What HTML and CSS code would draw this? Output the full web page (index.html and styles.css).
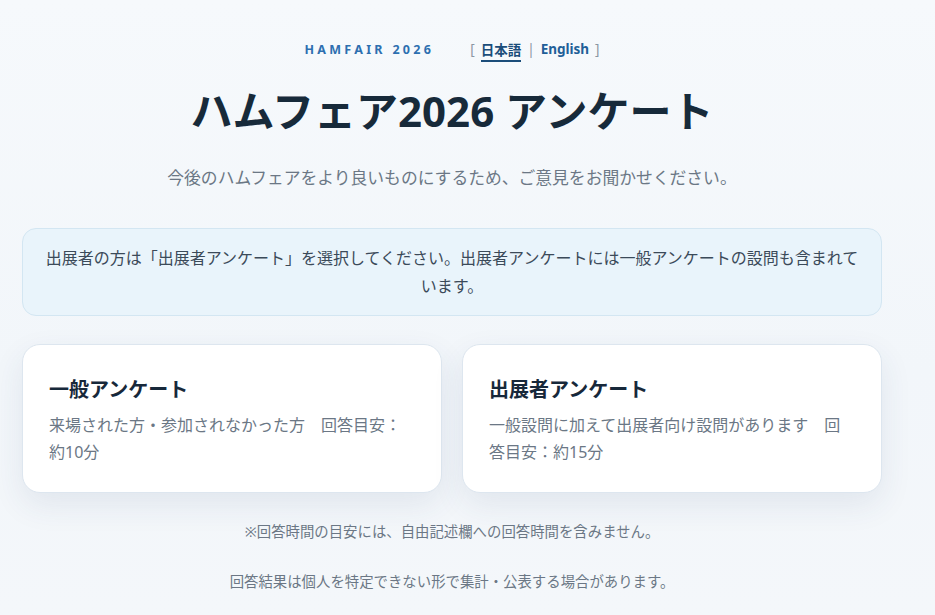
FILE: index.html
```html
<!DOCTYPE html>
<html lang="ja">
<head>
    <meta charset="UTF-8">
    <meta name="viewport" content="width=device-width, initial-scale=1.0">
    <title>ハムフェア2026 アンケート</title>
    <link rel="stylesheet" href="styles.css">
</head>
<body>
    <div class="page">
        <!-- Top bar -->
        <header class="topbar">
            <span class="brand">HAMFAIR 2026</span>
            <nav class="lang">
                <span class="bracket">[</span>
                <a href="#" class="lang-link active">日本語</a>
                <span class="sep">|</span>
                <a href="#" class="lang-link">English</a>
                <span class="bracket">]</span>
            </nav>
        </header>

        <h1 class="title">ハムフェア2026 アンケート</h1>
        <p class="lead">今後のハムフェアをより良いものにするため、ご意見をお聞かせください。</p>

        <!-- Notice -->
        <div class="notice">
            出展者の方は「出展者アンケート」を選択してください。出展者アンケートには一般アンケートの設問も含まれています。
        </div>

        <!-- Survey choices -->
        <div class="cards">
            <a href="#" class="card">
                <h2>一般アンケート</h2>
                <p>来場された方・参加されなかった方　回答目安：約10分</p>
            </a>
            <a href="#" class="card">
                <h2>出展者アンケート</h2>
                <p>一般設問に加えて出展者向け設問があります　回答目安：約15分</p>
            </a>
        </div>

        <p class="note">※回答時間の目安には、自由記述欄への回答時間を含みません。</p>
        <p class="note">回答結果は個人を特定できない形で集計・公表する場合があります。</p>
    </div>
</body>
</html>
```

FILE: styles.css
```css
/* Base */
body {
    margin: 0;
    padding: 0;
    font-family: "Noto Sans", "Noto Sans CJK JP", sans-serif;
    background: linear-gradient(180deg, #f6f9fc 0%, #f2f6fa 60%, #f4f7fa 100%);
    color: #17283a;
    min-height: 615px;
}

.page {
    width: 860px;
    margin-left: 22px;
    padding-top: 39px;
    text-align: center;
}

/* Top bar */
.topbar {
    display: flex;
    justify-content: center;
    align-items: center;
    gap: 36px;
    height: 20px;
}

.brand {
    font-size: 12.5px;
    font-weight: bold;
    letter-spacing: 3.3px;
    color: #2d6fb0;
}

.lang {
    display: flex;
    align-items: center;
    gap: 6px;
    font-size: 13.5px;
    font-weight: bold;
}

.bracket,
.sep {
    color: #8a96a3;
    font-weight: normal;
}

.lang-link {
    color: #1f5f98;
    text-decoration: none;
}

.lang-link.active {
    color: #1b4d7a;
    border-bottom: 2px solid #1b4d7a;
    padding-bottom: 1px;
    margin-top: 3px;
}

/* Heading */
.title {
    margin: 24px 0 0;
    font-size: 42px;
    line-height: 55px;
    font-weight: bold;
    color: #172a3a;
}

.lead {
    margin: 27px 0 0;
    font-size: 16.8px;
    line-height: 26px;
    color: #6b7785;
}

/* Notice box */
.notice {
    margin-top: 37px;
    padding: 15px 20px 15px;
    background: #e9f4fb;
    border: 1px solid #d3e6f2;
    border-radius: 14px;
    font-size: 16px;
    line-height: 28px;
    color: #3b4a59;
}

/* Cards */
.cards {
    display: grid;
    grid-template-columns: 1fr 1fr;
    gap: 20px;
    margin-top: 28px;
}

.card {
    display: block;
    text-align: left;
    padding: 31px 26px 26px;
    background: #ffffff;
    border: 1px solid #dde6ef;
    border-radius: 18px;
    box-shadow: 0 12px 32px rgba(40, 70, 110, 0.09);
    text-decoration: none;
}

.card h2 {
    margin: 0;
    font-size: 20px;
    line-height: 28px;
    font-weight: bold;
    color: #17283a;
}

.card p {
    margin: 8px 0 0;
    font-size: 16px;
    line-height: 27px;
    color: #6b7785;
}

/* Footer notes */
.note {
    margin: 28px 0 0;
    font-size: 14.4px;
    line-height: 22px;
    color: #6b7785;
}

.note + .note {
    margin-top: 28px;
}
```
